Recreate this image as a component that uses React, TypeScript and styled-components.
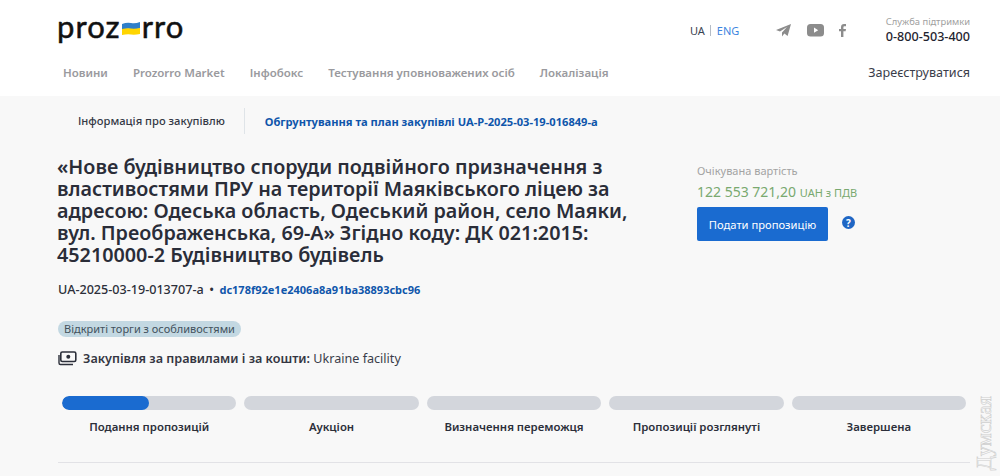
import React from "react";
import styled, { createGlobalStyle } from "styled-components";

const Global = createGlobalStyle`
  html, body { margin: 0; padding: 0; background: #f8f8f8; }
  body { font-family: "Noto Sans", "Open Sans", sans-serif; color: #2c2f3a; width: 1000px; height: 476px; overflow: hidden; }
  * { box-sizing: border-box; }
`;

const Page = styled.div`position: relative; width: 1000px; height: 476px; overflow: hidden;`;
const Header = styled.header`height: 96px; background: #fff; padding: 0 30px 0 58px; display: flex; flex-direction: column;`;
const TopRow = styled.div`display: flex; align-items: center; height: 56px;`;
const Logo = styled.div`
  display: flex; align-items: center; font-family: Lato, sans-serif; font-weight: 400; font-size: 31px; letter-spacing: 1.1px;
  color: #111; -webkit-text-stroke: 0.5px #111; line-height: 1; margin: -3px 0 0 -1px; width: 601px;
`;
const Flag = styled.svg`display: block; width: 18px; height: 13px; margin: 4px 2px 0 1px;`;
const Lang = styled.div`margin-left: 32px; font-size: 11px; display: flex; align-items: center; margin-top: 5px; width: 86px;`;
const LangUa = styled.span`color: #3a4452; padding-right: 5px; border-right: 1px solid #b5bcc6; line-height: 11px;`;
const LangEng = styled.span`color: #3d85e0; padding-left: 6px;`;
const Social = styled.div`display: flex; align-items: center; margin-top: 4px; width: 110px;`;
const Telegram = styled.svg`display: block; margin-right: 16px;`;
const Youtube = styled.svg`display: block; margin-right: 15px;`;
const Support = styled.div`margin-left: auto; text-align: right; margin-top: 4px; white-space: nowrap;`;
const SupportLabel = styled.div`font-size: 9.4px; color: #a0a0a0; line-height: 14px;`;
const Phone = styled.div`font-size: 12.6px; font-weight: 500; color: #1f2430; line-height: 16px;`;
const NavRow = styled.nav`display: flex; align-items: center; height: 32px; padding-left: 5px;`;
const NavLink = styled.a`font-size: 11.5px; font-weight: 600; color: #9a9a9e; margin-right: 25px;`;
const Register = styled.a`margin-left: auto; font-size: 12.6px; color: #3a3d4a;`;

const Main = styled.main`padding: 0 30px 0 58px;`;
const Tabs = styled.div`display: flex; align-items: center; height: 26px; margin-top: 12px; padding-left: 20px;`;
const TabText = styled.span`font-size: 11.2px; font-weight: 500; color: #343845; padding-right: 19px; line-height: 26px; border-right: 1px solid #dfe4e8;`;
const TabLink = styled.a`font-size: 11.13px; font-weight: 700; color: #0f56ab; padding-left: 20px;`;
const Columns = styled.div`display: flex; margin-top: 22px;`;
const Left = styled.div`width: 639px;`;
const Title = styled.h1`margin: 0 0 0 -1px; font-size: 19.75px; line-height: 22px; font-weight: 600; color: #2a2d38; width: 590px;`;
const Ids = styled.div`margin-top: 15px; font-size: 12.6px; line-height: 18px; display: flex; align-items: baseline; gap: 5.5px; color: #2c2f3a; font-weight: 500;`;
const Hash = styled.a`color: #0f56ab; font-weight: 700; font-size: 11px;`;
const Badge = styled.div`display: inline-block; margin-top: 22px; height: 16px; line-height: 16px; padding: 0 6px; border-radius: 8px; background: #c3d8e2; font-size: 11px; color: #42515c;`;
const FundRow = styled.div`display: flex; align-items: center; gap: 6px; margin-top: 10px; height: 20px; font-size: 12.6px; color: #3a3d4a;`;
const FundLabel = styled.b`font-weight: 600; color: #343642; font-size: 12.6px;`;
const Right = styled.aside`padding-top: 6px;`;
const ValueLabel = styled.div`font-size: 11px; color: #a3a3a3; line-height: 18px;`;
const Value = styled.div`font-size: 14px; color: #79a96f; line-height: 20px; margin-top: 2px; white-space: nowrap;`;
const Unit = styled.span`font-size: 11px;`;
const ButtonRow = styled.div`display: flex; margin-top: 4px;`;
const Button = styled.button`
  width: 131px; height: 34px; border: 0; border-radius: 2px; background: #1a6bd0; color: #fff;
  font-family: inherit; font-size: 11.2px; padding: 0;
`;
const Help = styled.span`
  width: 13px; height: 13px; border-radius: 50%; background: #1f66c4; color: #fff; font-size: 10px; font-weight: 700;
  display: flex; align-items: center; justify-content: center; margin: 9px 0 0 14px; line-height: 1;
`;
const Steps = styled.div`display: flex; gap: 8px; margin: 28px 4px 0;`;
const Step = styled.div`flex: 1; min-width: 0; text-align: center;`;
const Track = styled.div`height: 14px; border-radius: 7px; background: #d3d6dc; overflow: hidden;`;
const Fill = styled.div`height: 100%; border-radius: 7px; background: #1a6bd0;`;
const StepLabel = styled.div`margin-top: 8px; font-size: 11.4px; line-height: 18px; font-weight: 600; color: #2c2f3a;`;
const Rule = styled.hr`border: 0; border-top: 1px solid #e2e2e6; margin: 26px 0 0;`;
const Watermark = styled.div`
  position: absolute; right: 6px; bottom: 6px; writing-mode: vertical-rl; transform: rotate(180deg);
  font-family: "Liberation Serif", serif; font-size: 20.5px; line-height: 1; color: #f8f8f8;
  -webkit-text-stroke: 0.6px #cfcfcf;
`;

const steps = ["Подання пропозицій", "Аукціон", "Визначення переможця", "Пропозиції розглянуті", "Завершена"];
const nav = ["Новини", "Prozorro Market", "Інфобокс", "Тестування уповноважених осіб", "Локалізація"];

export default function App() {
  return (
    <Page>
      <Global />
      <Header>
        <TopRow>
          <Logo>
            proz
            <Flag viewBox="0 0 18 13">
              <path d="M0 2 Q5 0 9 1 T18 0 V6.5 Q13 7.5 9 7 T0 7.5Z" fill="#2f7fc9" stroke="none" />
              <path d="M0 7 Q5 6 9 6.5 T18 6 V12 Q13 13 9 12.5 T0 13Z" fill="#ffd500" stroke="none" />
            </Flag>
            rro
          </Logo>
          <Lang><LangUa>UA</LangUa><LangEng>ENG</LangEng></Lang>
          <Social>
            <Telegram width="15" height="13" viewBox="0 0 15 13">
              <path d="M15 0 L0 6 L4 7.6 L11 3 L6 8.4 V12.4 L8.4 9.6 L11.6 12 Z" fill="#8c8c8c" />
            </Telegram>
            <Youtube width="17" height="13" viewBox="0 0 17 13">
              <rect width="17" height="12.5" rx="3.5" fill="#8c8c8c" />
              <path d="M7 3.6 L11.2 6.2 L7 8.8Z" fill="#fff" />
            </Youtube>
            <svg width="7" height="13" viewBox="0 0 7 13">
              <path d="M2 13 V7.2 H0 V5 H2 V3.2 C2 1 3.2 0 5 0 H7 V2.2 H5.6 C4.7 2.2 4.4 2.6 4.4 3.4 V5 H7 L6.6 7.2 H4.4 V13Z" fill="#8c8c8c" />
            </svg>
          </Social>
          <Support>
            <SupportLabel>Служба підтримки</SupportLabel>
            <Phone>0-800-503-400</Phone>
          </Support>
        </TopRow>
        <NavRow>
          {nav.map((n) => <NavLink key={n}>{n}</NavLink>)}
          <Register>Зареєструватися</Register>
        </NavRow>
      </Header>
      <Main>
        <Tabs>
          <TabText>Інформація про закупівлю</TabText>
          <TabLink>Обгрунтування та план закупівлі UA-P-2025-03-19-016849-a</TabLink>
        </Tabs>
        <Columns>
          <Left>
            <Title>«Нове будівництво споруди подвійного призначення з властивостями ПРУ на території Маяківського ліцею за адресою: Одеська область, Одеський район, село Маяки, вул. Преображенська, 69-А» Згідно коду: ДК 021:2015: 45210000-2 Будівництво будівель</Title>
            <Ids><span>UA-2025-03-19-013707-a</span><span>•</span><Hash>dc178f92e1e2406a8a91ba38893cbc96</Hash></Ids>
            <Badge>Відкриті торги з особливостями</Badge>
            <FundRow>
              <svg width="19" height="15" viewBox="0 0 19 15" fill="none" stroke="#2c2f3a">
                <rect x="2.8" y="1" width="15" height="9.5" rx="1.5" strokeWidth="1.6" />
                <path d="M1 4 V12 Q1 13.5 2.5 13.5 H15" strokeWidth="1.4" />
                <circle cx="10.3" cy="5.8" r="2" fill="#2c2f3a" stroke="none" />
              </svg>
              <span><FundLabel>Закупівля за правилами і за кошти:</FundLabel> Ukraine facility</span>
            </FundRow>
          </Left>
          <Right>
            <ValueLabel>Очікувана вартість</ValueLabel>
            <Value>122 553 721,20 <Unit>UAH з ПДВ</Unit></Value>
            <ButtonRow><Button>Подати пропозицію</Button><Help>?</Help></ButtonRow>
          </Right>
        </Columns>
        <Steps>
          {steps.map((s, i) => (
            <Step key={s}>
              <Track>{i === 0 && <Fill style={{ width: "50%" }} />}</Track>
              <StepLabel>{s}</StepLabel>
            </Step>
          ))}
        </Steps>
        <Rule />
      </Main>
      <Watermark>Думская</Watermark>
    </Page>
  );
}
